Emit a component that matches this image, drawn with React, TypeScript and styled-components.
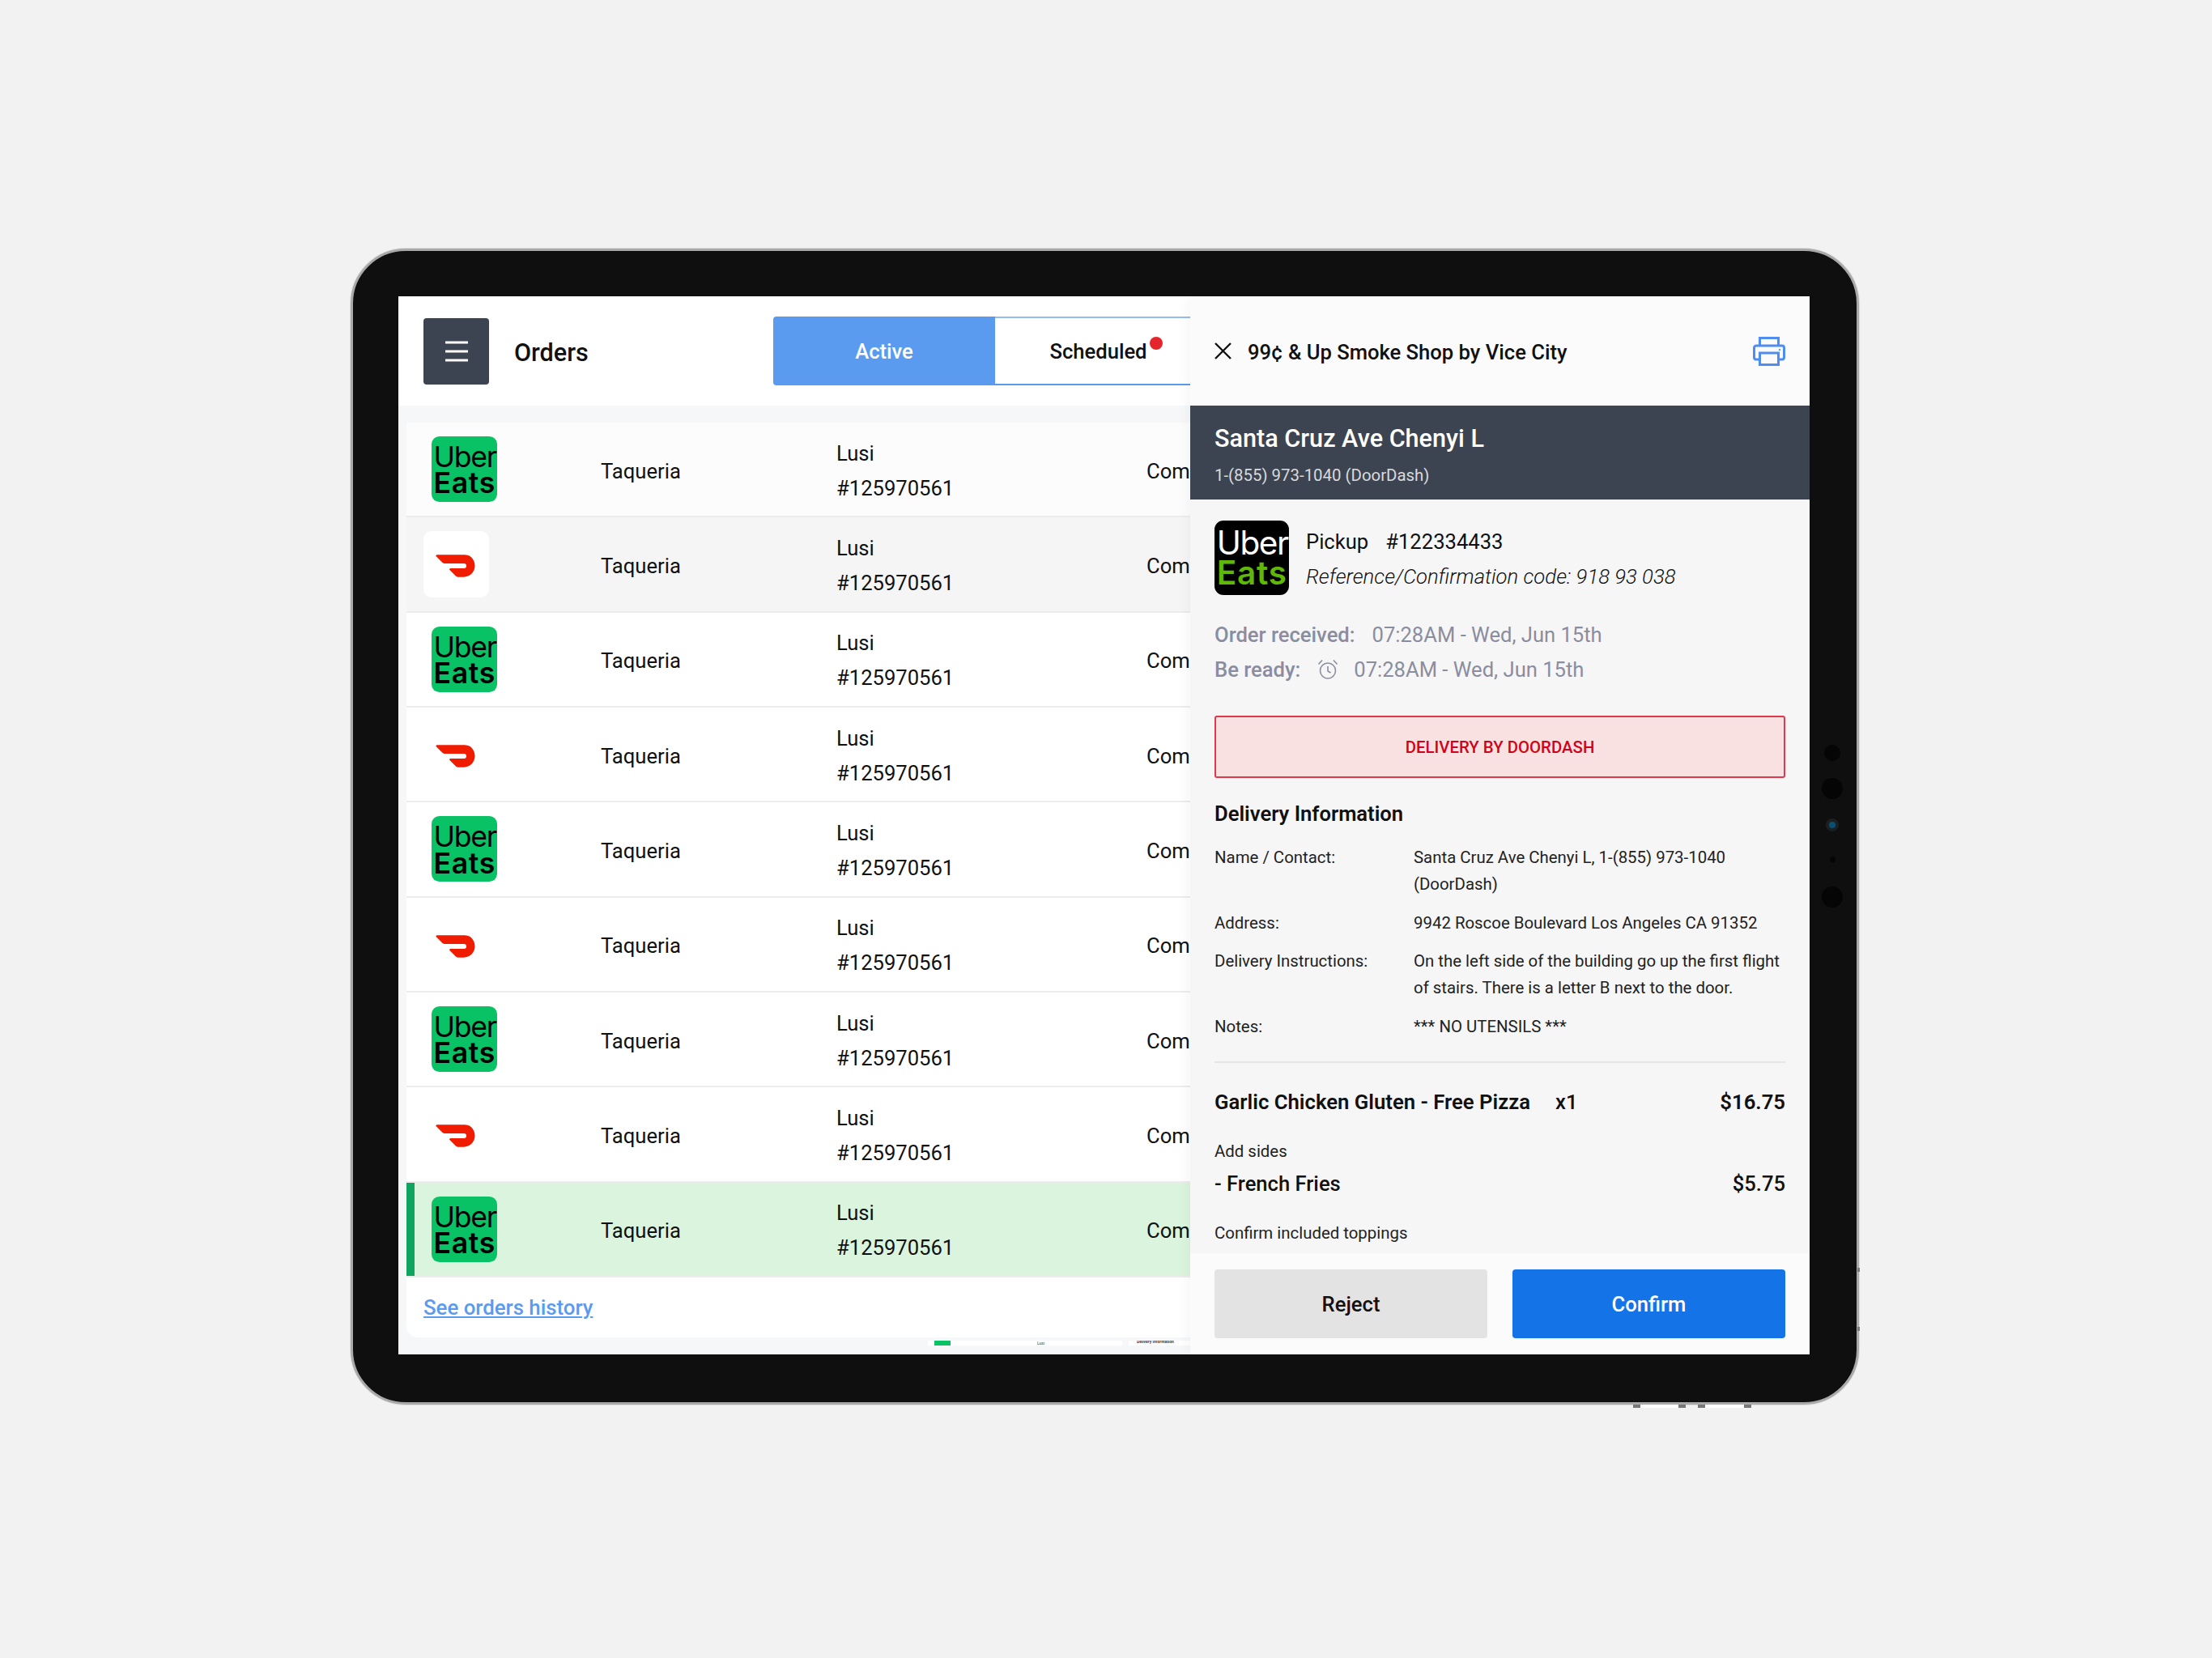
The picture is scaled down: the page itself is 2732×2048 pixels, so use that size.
import styled, { createGlobalStyle } from "styled-components";

const rows = ["uber", "dash", "uber", "dash", "uber", "dash", "uber", "dash", "uber"];

const GlobalStyle = createGlobalStyle`
	* {
		box-sizing: border-box;
	}
	html, body {
		margin: 0;
		background: #f2f2f2;
		font-family: Roboto, "Liberation Sans", sans-serif;
	}
`;

const DoorDashMark = () => (
	<DashSvg viewBox="0 5 24 14">
		<path
			fill="#ef1c00"
			d="M23.071 8.409a6.09 6.09 0 00-5.396-3.228H.584A.589.589 0 00.17 6.184L3.894 9.93a1.752 1.752 0 001.242.516h12.049a1.554 1.554 0 11.031 3.108H8.91a.589.589 0 00-.415 1.003l3.725 3.747a1.75 1.75 0 001.242.516h3.757c4.887 0 8.584-5.225 5.852-10.412"
		/>
	</DashSvg>
);

const OrderRow = ({ kind, index }: { kind: string; index: number }) => (
	<Row $tone={index === 0 ? "#fcfcfc" : index === 1 ? "#f5f5f5" : index === 8 ? "#daf4dd" : "#ffffff"} $selected={index === 8}>
		{kind === "uber" ? (
			<UberLogo $size={81} $bg="#0ac266" $top="#000" $bottom="#000" $offset={10}>
				<span>Uber</span>
				<span>Eats</span>
			</UberLogo>
		) : (
			<DashTile>
				<DoorDashMark />
			</DashTile>
		)}
		<Cell>Taqueria</Cell>
		<Customer>
			<span>Lusi</span>
			<span>#125970561</span>
		</Customer>
		<Cell>Com</Cell>
	</Row>
);

export default function App() {
	return (
		<Page>
			<GlobalStyle />
			<Device>
				<Sensors>
					<Sensor $size={20} $after={21} />
					<Sensor $size={26} $after={28} />
					<Lens />
					<Sensor $size={7} $after={30} />
					<Sensor $size={26} $after={0} />
				</Sensors>
				<Screen>
					<LeftPane>
						<TopBar>
							<MenuButton>
								<svg width="28" height="26" viewBox="0 0 28 26">
									<path d="M0 2h28M0 13h28M0 24h28" stroke="#fff" strokeWidth="3" />
								</svg>
							</MenuButton>
							<PageTitle>Orders</PageTitle>
							<Tabs>
								<ActiveTab>Active</ActiveTab>
								<IdleTab>
									Scheduled<Dot />
								</IdleTab>
							</Tabs>
						</TopBar>
						<ListArea>
							<Card>
								{rows.map((kind, i) => (
									<OrderRow key={i} kind={kind} index={i} />
								))}
								<HistoryLink href="#">See orders history</HistoryLink>
							</Card>
							<GhostStrip>
								<GhostLogo />
								<GhostText>Lusi</GhostText>
								<GhostGap />
								<GhostHeading>Delivery Information</GhostHeading>
							</GhostStrip>
						</ListArea>
					</LeftPane>
					<RightPane>
						<PaneHeader>
							<svg width="21" height="21" viewBox="0 0 21 21">
								<path d="M1 1l19 19M20 1L1 20" stroke="#111" strokeWidth="2.4" />
							</svg>
							<ShopName>99¢ &amp; Up Smoke Shop by Vice City</ShopName>
							<svg width="40" height="36" viewBox="0 0 40 36" fill="none" stroke="#4f8ef0" strokeWidth="3">
								<path d="M8.5 11V1.5h23V11" />
								<path d="M8.5 28H4a2.5 2.5 0 0 1-2.5-2.5v-12A2.500 2.500 0 0 1 4 11h32a2.500 2.500 0 0 1 2.500 2.500v12A2.500 2.500 0 0 1 36 28h-4.500" />
								<rect x="8.5" y="20" width="23" height="14.500" />
								<circle cx="33" cy="16" r="0.800" fill="#4f8ef0" strokeWidth="1" />
							</svg>
						</PaneHeader>
						<CustomerBand>
							<CustomerName>Santa Cruz Ave Chenyi L</CustomerName>
							<CustomerPhone>1-(855) 973-1040 (DoorDash)</CustomerPhone>
						</CustomerBand>
						<PaneBody>
							<OrderHead>
								<UberLogo $size={92} $bg="#000" $top="#fff" $bottom="#5fb709" $offset={0}>
									<span>Uber</span>
									<span>Eats</span>
								</UberLogo>
								<div>
									<PickupLine>
										<span>Pickup</span>
										<span>#122334433</span>
									</PickupLine>
									<RefLine>Reference/Confirmation code: 918 93 038</RefLine>
								</div>
							</OrderHead>
							<TimeLine>
								<b>Order received:</b>
								<span>07:28AM - Wed, Jun 15th</span>
							</TimeLine>
							<TimeLine>
								<b>Be ready:</b>
								<ClockIcon viewBox="0 0 26 26">
									<circle cx="13" cy="14.500" r="9.500" />
									<path d="M13 9v6l3.500 2M1.500 6.500L6 1.500M24.500 6.500L20 1.500" />
								</ClockIcon>
								<span>07:28AM - Wed, Jun 15th</span>
							</TimeLine>
							<Banner>DELIVERY BY DOORDASH</Banner>
							<SectionTitle>Delivery Information</SectionTitle>
							<InfoGrid>
								<span>Name / Contact:</span>
								<span>Santa Cruz Ave Chenyi L, 1-(855) 973-1040 (DoorDash)</span>
								<span>Address:</span>
								<span>9942 Roscoe Boulevard Los Angeles CA 91352</span>
								<span>Delivery Instructions:</span>
								<span>On the left side of the building go up the first flight of stairs. There is a letter B next to the door.</span>
								<span>Notes:</span>
								<span>*** NO UTENSILS ***</span>
							</InfoGrid>
							<Divider />
							<ItemLine>
								<span>Garlic Chicken Gluten - Free Pizza</span>
								<Qty>x1</Qty>
								<Price>$16.75</Price>
							</ItemLine>
							<OptionLabel>Add sides</OptionLabel>
							<SideLine>
								<span>- French Fries</span>
								<Price>$5.75</Price>
							</SideLine>
							<OptionLabel $gap={28}>Confirm included toppings</OptionLabel>
						</PaneBody>
						<PaneFooter>
							<RejectButton>Reject</RejectButton>
							<ConfirmButton>Confirm</ConfirmButton>
						</PaneFooter>
					</RightPane>
				</Screen>
				<SideMarks>
					<SideMark />
					<SideMark />
				</SideMarks>
				<BottomMarks>
					<BottomMark $width={65} />
					<BottomMark $width={66} />
				</BottomMarks>
			</Device>
		</Page>
	);
}

const Page = styled.div`
	width: 2732px;
	height: 2048px;
	padding: 307px 0 0 433px;
	background: #f2f2f2;
	overflow: hidden;
`;

const Device = styled.div`
	position: relative;
	width: 1863px;
	height: 1428px;
	padding: 56px 58px 59px 56px;
	background: #0f0f0f;
	border: 3px solid #a9a9a9;
	border-radius: 68px;
	box-shadow: 0 0 0 1px #dedede;
`;

const Sensors = styled.div`
	position: absolute;
	right: 17px;
	top: 610px;
	width: 26px;
	display: flex;
	flex-direction: column;
	align-items: center;
`;

const Sensor = styled.div<{ $size: number; $after: number }>`
	width: ${(p) => p.$size}px;
	height: ${(p) => p.$size}px;
	margin-bottom: ${(p) => p.$after}px;
	border-radius: 50%;
	background: #050505;
`;

const Lens = styled.div`
	width: 8px;
	height: 8px;
	margin-bottom: 35px;
	border-radius: 50%;
	background: #07506f;
	box-shadow: 0 0 0 4px #1b1f22;
`;

const SideMarks = styled.div`
	position: absolute;
	right: -4px;
	bottom: 88px;
	display: flex;
	flex-direction: column;
	gap: 68px;
`;

const SideMark = styled.div`
	width: 3px;
	height: 5px;
	background: #777;
`;

const BottomMarks = styled.div`
	position: absolute;
	left: 1581px;
	bottom: -7px;
	display: flex;
	gap: 15px;
`;

const BottomMark = styled.div<{ $width: number }>`
	width: ${(p) => p.$width}px;
	height: 4px;
	background: #fff;
	border-left: 9px solid #777;
	border-right: 9px solid #777;
`;

const Screen = styled.div`
	width: 1743px;
	height: 1307px;
	display: grid;
	grid-template-columns: 978px 765px;
	grid-template-rows: 1307px;
	overflow: hidden;
	background: #fff;
`;

const LeftPane = styled.div`
	display: flex;
	flex-direction: column;
	min-width: 0;
	overflow: hidden;
	background: #f6f7f9;
`;

const TopBar = styled.div`
	height: 135px;
	flex: none;
	display: flex;
	align-items: center;
	padding-left: 31px;
	background: #fff;
`;

const MenuButton = styled.div`
	width: 81px;
	height: 82px;
	flex: none;
	display: flex;
	align-items: center;
	justify-content: center;
	border-radius: 4px;
	background: #3d4451;
`;

const PageTitle = styled.div`
	width: 351px;
	flex: none;
	padding: 4px 0 0 31px;
	font-size: 30.6px;
	font-weight: 500;
	color: #111;
`;

const Tabs = styled.div`
	display: flex;
	flex: none;
	height: 85px;
`;

const ActiveTab = styled.div`
	width: 274px;
	display: flex;
	align-items: center;
	justify-content: center;
	padding-top: 1px;
	border-radius: 4px 0 0 4px;
	background: #5a9bef;
	color: #fff;
	font-size: 25.6px;
	font-weight: 500;
`;

const IdleTab = styled.div`
	width: 274px;
	display: flex;
	align-items: center;
	justify-content: center;
	padding-top: 1px;
	border: solid #5a9bef;
	border-top-color: #93bdf4;
	border-width: 2px 0;
	background: #fff;
	color: #111;
	font-size: 25.6px;
	font-weight: 500;
`;

const Dot = styled.span`
	width: 16px;
	height: 16px;
	margin: -21px 0 0 3px;
	border-radius: 50%;
	background: #e4252b;
`;

const ListArea = styled.div`
	flex: 1;
	padding: 21px 0 0 10px;
`;

const Card = styled.div`
	background: #fff;
	border-radius: 0 0 0 14px;
	height: 1130px;
`;

const Row = styled.div<{ $tone: string; $selected: boolean }>`
	height: 117.33px;
	display: grid;
	grid-template-columns: 219px 291px 383px 60px;
	align-items: center;
	padding-left: 21px;
	border-bottom: 2px solid #ececec;
	background: ${(p) => p.$tone};
	box-shadow: ${(p) => (p.$selected ? "inset 10px 0 0 #0fa45f" : "none")};
	font-size: 25.6px;
	color: #111;
`;

const Cell = styled.span`
	margin-top: 4px;
`;

const UberLogo = styled.div<{ $size: number; $bg: string; $top: string; $bottom: string; $offset: number }>`
	width: ${(p) => p.$size}px;
	height: ${(p) => p.$size}px;
	flex: none;
	margin-left: ${(p) => p.$offset}px;
	display: flex;
	flex-direction: column;
	justify-content: center;
	padding: ${(p) => p.$size * 0.02}px 0 0 ${(p) => p.$size * 0.03}px;
	border-radius: ${(p) => p.$size * 0.12}px;
	background: ${(p) => p.$bg};
	font-family: Inter, sans-serif;
	font-size: ${(p) => p.$size * 0.44}px;
	line-height: ${(p) => p.$size * 0.4}px;
	letter-spacing: -0.035em;
	white-space: nowrap;
	overflow: hidden;

	span:first-child {
		color: ${(p) => p.$top};
		font-weight: 400;
	}
	span:last-child {
		color: ${(p) => p.$bottom};
		font-weight: 600;
		letter-spacing: 0.02em;
	}
`;

const DashTile = styled.div`
	width: 81px;
	height: 82px;
	display: flex;
	align-items: center;
	justify-content: center;
	border-radius: 10px;
	background: #fff;
`;

const DashSvg = styled.svg`
	width: 49px;
	height: 28px;
	margin: 5px 3px 0 0;
`;

const Customer = styled.div`
	display: flex;
	flex-direction: column;
	margin-top: 4px;
	line-height: 43px;
`;

const HistoryLink = styled.a`
	display: block;
	margin: 22px 0 0 21px;
	font-size: 25.8px;
	font-weight: 500;
	color: #5a9bef;
`;

const GhostStrip = styled.div`
	display: flex;
	align-items: flex-start;
	height: 6px;
	margin: 4px 0 0 644px;
	overflow: hidden;
	background: #fff;
	font-size: 5px;
	color: #444;
`;

const GhostLogo = styled.div`
	width: 20px;
	height: 6px;
	margin: 0 107px 0 8px;
	background: #0ac266;
`;

const GhostText = styled.div`
	width: 105px;
`;

const GhostGap = styled.div`
	width: 8px;
	height: 6px;
	background: #f6f7f9;
`;

const GhostHeading = styled.div`
	margin-left: 10px;
	margin-top: -2px;
	font-weight: 700;
	white-space: nowrap;
`;

const RightPane = styled.div`
	display: flex;
	flex-direction: column;
	min-width: 0;
	min-height: 0;
	position: relative;
	background: #f6f6f6;
	box-shadow: -6px 0 12px rgba(0, 0, 0, 0.03);
`;

const PaneHeader = styled.div`
	height: 135px;
	flex: none;
	display: flex;
	align-items: center;
	padding: 0 30px;
	background: #fbfbfb;
`;

const ShopName = styled.div`
	flex: 1;
	padding: 2px 0 0 20px;
	font-size: 25.6px;
	font-weight: 500;
	color: #111;
`;

const CustomerBand = styled.div`
	height: 116px;
	flex: none;
	padding: 21px 30px 0;
	background: #3d4451;
	color: #fff;
`;

const CustomerName = styled.div`
	font-size: 30.6px;
	font-weight: 500;
	line-height: 40px;
`;

const CustomerPhone = styled.div`
	margin-top: 10px;
	font-size: 20.4px;
	line-height: 30px;
	color: #d8dadd;
`;

const PaneBody = styled.div`
	flex: 1;
	min-height: 0;
	padding: 26px 30px 0;
	overflow: hidden;
`;

const OrderHead = styled.div`
	display: flex;
	gap: 21px;
	margin-bottom: 27px;
`;

const PickupLine = styled.div`
	display: flex;
	gap: 21px;
	padding-top: 6px;
	font-size: 25.6px;
	line-height: 40px;
	color: #111;
`;

const RefLine = styled.div`
	margin-top: 3px;
	font-size: 25.7px;
	font-style: italic;
	font-weight: 300;
	line-height: 40px;
	color: #111;
`;

const TimeLine = styled.div`
	display: flex;
	align-items: center;
	gap: 21px;
	height: 43px;
	font-size: 25.6px;
	color: #8a8d9f;

	b {
		font-weight: 500;
	}
`;

const ClockIcon = styled.svg`
	width: 26px;
	height: 26px;
	margin-right: -2px;
	fill: none;
	stroke: #8a8d9f;
	stroke-width: 1.6;
`;

const Banner = styled.div`
	height: 77px;
	margin-top: 36px;
	display: flex;
	align-items: center;
	justify-content: center;
	border: 2px solid #e2384b;
	border-radius: 3px;
	background: #f9e1e1;
	color: #d0021b;
	font-size: 20.4px;
	font-weight: 500;
`;

const SectionTitle = styled.div`
	margin-top: 26px;
	font-size: 25.6px;
	font-weight: 600;
	line-height: 36px;
	color: #111;
`;

const InfoGrid = styled.div`
	display: grid;
	grid-template-columns: 246px 1fr;
	row-gap: 14.500px;
	margin-top: 20px;
	font-size: 20.4px;
	line-height: 33px;
	color: #222;
`;

const Divider = styled.div`
	height: 2px;
	margin-top: 26px;
	background: #e5e5e5;
`;

const ItemLine = styled.div`
	display: flex;
	align-items: center;
	margin-top: 30px;
	font-size: 25.7px;
	font-weight: 600;
	line-height: 36px;
	color: #111;
`;

const Qty = styled.span`
	margin-left: 31px;
	font-weight: 500;
`;

const Price = styled.span`
	margin-left: auto;
`;

const OptionLabel = styled.div<{ $gap?: number }>`
	margin-top: ${(p) => p.$gap ?? 28}px;
	font-size: 20.4px;
	line-height: 30px;
	color: #222;
`;

const SideLine = styled.div`
	display: flex;
	margin-top: 7px;
	font-size: 25.6px;
	font-weight: 500;
	line-height: 36px;
	color: #111;
`;

const PaneFooter = styled.div`
	height: 125px;
	flex: none;
	display: grid;
	grid-template-columns: 1fr 1fr;
	gap: 31px;
	padding: 20px 30px;
	background: #fbfbfb;
`;

const RejectButton = styled.div`
	display: flex;
	align-items: center;
	justify-content: center;
	padding-top: 1px;
	border-radius: 4px;
	background: #e3e3e3;
	color: #111;
	font-size: 25.6px;
	font-weight: 500;
`;

const ConfirmButton = styled(RejectButton)`
	background: #1473e6;
	color: #fff;
`;
